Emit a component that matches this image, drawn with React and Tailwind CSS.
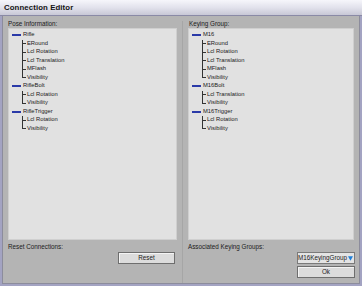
import React from 'react';

const poseTree = [
  { name: 'Rifle', children: ['ERound', 'Lcl Rotation', 'Lcl Translation', 'MFlash', 'Visibility'] },
  { name: 'RifleBolt', children: ['Lcl Rotation', 'Visibility'] },
  { name: 'RifleTrigger', children: ['Lcl Rotation', 'Visibility'] },
];

const keyingTree = [
  { name: 'M16', children: ['ERound', 'Lcl Rotation', 'Lcl Translation', 'MFlash', 'Visibility'] },
  { name: 'M16Bolt', children: ['Lcl Translation', 'Visibility'] },
  { name: 'M16Trigger', children: ['Lcl Rotation', 'Visibility'] },
];

function TreeNode({ node }) {
  return (
    <div>
      <div className="flex items-center h-[8.5px]">
        <span className="w-[9px] h-[2px] bg-[#2b3aa8] ml-[3px] mr-[2px]" />
        <span>{node.name}</span>
      </div>
      {node.children.map((child, i) => {
        const last = i === node.children.length - 1;
        return (
          <div key={i} className="flex items-center h-[8.5px] pl-[13px] relative">
            <span
              className={`absolute left-[13px] top-0 w-px bg-[#333] ${last ? 'h-[4.5px]' : 'h-full'}`}
            />
            <span className="w-[4px] h-px bg-[#333] mr-[1px]" />
            <span>{child}</span>
          </div>
        );
      })}
    </div>
  );
}

function TreeBox({ nodes, width }) {
  return (
    <div className={`${width} h-[212px] bg-[#e1e1e1] border border-[#cfcfcf] pt-[2px] text-[#202020] text-[5.8px]`}>
      {nodes.map((n, i) => (
        <TreeNode key={i} node={n} />
      ))}
    </div>
  );
}

function Button({ children, className = '' }) {
  return (
    <div
      className={`h-[12px] bg-[#dcdcdc] border border-[#6e6e6e] flex items-center justify-center text-[#202020] shadow-[inset_1px_1px_0_#f4f4f4] ${className}`}
    >
      {children}
    </div>
  );
}

export default function App() {
  return (
    <div
      className="w-[362px] h-[286px] bg-[#a3a3c2] p-[2px] pt-0 flex flex-col text-[6.3px] leading-none"
      style={{ fontFamily: '"Liberation Sans", Arial, sans-serif' }}
    >
      <div className="h-[16px] -mx-[2px] px-[4px] flex items-center bg-gradient-to-b from-[#f6f6fb] via-[#e2e2ec] to-[#c8c8d6] border-b border-[#8a8aa6] font-bold text-[7.8px] text-[#141414] tracking-[0.1px]">
        Connection Editor
      </div>
      <div className="flex-1 bg-[#b4b4b4] border-l border-r border-b border-[#8c8c9c] flex pl-[5px] pt-[5px]">
        <div className="w-[169px] flex flex-col">
          <div className="h-[7px] text-[#202020]">Pose Information:</div>
          <TreeBox nodes={poseTree} width="w-[169px]" />
          <div className="mt-[4px] h-[8px] text-[#202020]">Reset Connections:</div>
          <div className="flex justify-end pr-[2px]">
            <Button className="w-[57px]">Reset</Button>
          </div>
        </div>
        <div className="w-[11px] flex justify-center">
          <div className="w-px h-full bg-[#a6a6a6]" />
        </div>
        <div className="w-[166px] flex flex-col">
          <div className="h-[7px] text-[#202020] pl-[1px]">Keying Group:</div>
          <TreeBox nodes={keyingTree} width="w-[166px]" />
          <div className="mt-[4px] h-[8px] text-[#202020]">Associated Keying Groups:</div>
          <div className="flex flex-col items-end -mr-[1px] gap-[2px]">
            <div className="w-[58px] h-[12px] bg-[#e4e4e4] border border-[#7a7a7a] flex items-center justify-end pr-[1px] text-[#202020]">
              <span className="mr-[1px]">M16KeyingGroup</span>
              <svg width="8" height="7" viewBox="0 0 8 7">
                <path d="M0 0 H8 L4 7 Z" fill="#1f7fd8" />
              </svg>
            </div>
            <Button className="w-[58px]">Ok</Button>
          </div>
        </div>
      </div>
    </div>
  );
}
